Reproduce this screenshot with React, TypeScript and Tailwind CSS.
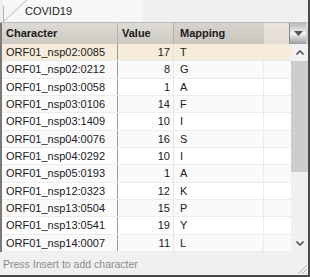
import React from "react";

const rows: [string, number, string][] = [
  ["ORF01_nsp02:0085", 17, "T"],
  ["ORF01_nsp02:0212", 8, "G"],
  ["ORF01_nsp03:0058", 1, "A"],
  ["ORF01_nsp03:0106", 14, "F"],
  ["ORF01_nsp03:1409", 10, "I"],
  ["ORF01_nsp04:0076", 16, "S"],
  ["ORF01_nsp04:0292", 10, "I"],
  ["ORF01_nsp05:0193", 1, "A"],
  ["ORF01_nsp12:0323", 12, "K"],
  ["ORF01_nsp13:0504", 15, "P"],
  ["ORF01_nsp13:0541", 19, "Y"],
  ["ORF01_nsp14:0007", 11, "L"],
];

export default function App() {
  return (
    <div
      className="w-[310px] h-[277px] bg-[#f0f0f0] flex flex-col text-[11px] text-[#202020] border-r-2 border-b-2 border-[#4a4a4a] overflow-hidden"
      style={{ fontFamily: '"Liberation Sans", Arial, sans-serif' }}
    >
      {/* Tab bar */}
      <div className="h-[23px] shrink-0 relative flex items-end border-b border-[#b8b8b8] bg-[#f0f0f0]">
        <div className="relative ml-[3px] h-[22px] w-[140px] flex items-center bg-[#f7f7f7]">
          <svg className="absolute left-0 top-0" width="26" height="22" viewBox="0 0 26 22">
            <line x1="0.5" y1="22" x2="0.5" y2="6" stroke="#b0b0b0" strokeWidth="1" />
            <line x1="1" y1="21" x2="24" y2="0" stroke="#b8b8b8" strokeWidth="1" />
          </svg>
          <span className="pl-[22px] pt-[1px] text-[11px] text-[#222]">COVID19</span>
        </div>
      </div>

      {/* Header */}
      <div className="h-[21px] shrink-0 flex border-l-2 border-[#7a7a7a] bg-gradient-to-b from-[#dedad4] to-[#cdc9c3]">
        <div className="w-[116px] flex items-center pl-[4px] font-bold border-r border-[#b5b1ab]">Character</div>
        <div className="w-[56px] flex items-center pl-[4px] font-bold border-r border-[#b5b1ab]">Value</div>
        <div className="w-[90px] flex items-center pl-[6px] font-bold bg-gradient-to-b from-[#d6d1ca] to-[#cbc6bf]">Mapping</div>
        <div className="w-[25px] bg-gradient-to-b from-[#ebe5dc] to-[#e3dcd2]" />
        <div className="w-[17px] flex items-center justify-center bg-gradient-to-b from-[#b8b8b8] via-[#f4f4f4] to-[#9c9c9c] border-l border-[#8a8a8a]">
          <svg width="9" height="5" viewBox="0 0 9 5">
            <path d="M0 0 L9 0 L4.5 5 Z" fill="#555" />
          </svg>
        </div>
      </div>

      {/* Body */}
      <div className="flex h-[208px] shrink-0 border-l-2 border-[#7a7a7a]">
        <div className="w-[289px] flex flex-col bg-white">
          {rows.map(([c, v, m], i) => (
            <div
              key={c}
              className={`h-[17.33px] shrink-0 flex items-center border-b border-[#ececec] ${
                i === 0 ? "bg-[#f7ecdb]" : i % 2 === 0 ? "bg-white" : "bg-[#fafafa]"
              }`}
            >
              <div className="w-[116px] pl-[4px] border-r border-[#9a9a9a] h-full flex items-center">{c}</div>
              <div className="w-[56px] pr-[3px] text-right border-r border-[#e4e4e4] h-full flex items-center justify-end">{v}</div>
              <div className="w-[90px] pl-[6px] border-r border-[#ececec] h-full flex items-center">{m}</div>
              <div className="flex-1 h-full" />
            </div>
          ))}
        </div>
        <div className="w-[17px] flex flex-col bg-[#f0f0f0]">
          <div className="h-[17px] flex items-center justify-center">
            <svg width="8" height="5" viewBox="0 0 8 5">
              <path d="M0.5 4.5 L4 1 L7.5 4.5" stroke="#555" strokeWidth="1.6" fill="none" />
            </svg>
          </div>
          <div className="h-[111px] bg-[#cdcdcd]" />
          <div className="flex-1" />
          <div className="h-[17px] flex items-center justify-center">
            <svg width="8" height="5" viewBox="0 0 8 5">
              <path d="M0.5 0.5 L4 4 L7.5 0.5" stroke="#555" strokeWidth="1.6" fill="none" />
            </svg>
          </div>
        </div>
      </div>

      {/* Footer */}
      <div className="flex-1 flex items-center pl-[3px] pt-[3px] text-[10.5px] text-[#8a8a8a] relative">
        Press Insert to add character
        <svg className="absolute right-0 bottom-0" width="12" height="12" viewBox="0 0 12 12">
          <line x1="11" y1="2" x2="2" y2="11" stroke="#b0b0b0" />
          <line x1="11" y1="6" x2="6" y2="11" stroke="#b0b0b0" />
          <line x1="11" y1="10" x2="10" y2="11" stroke="#b0b0b0" />
        </svg>
      </div>
    </div>
  );
}
